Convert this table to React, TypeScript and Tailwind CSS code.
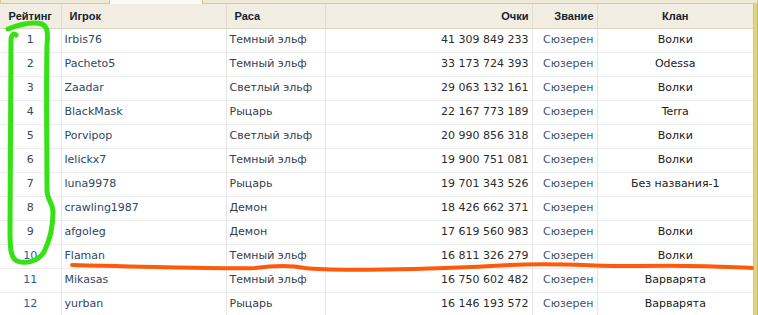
import React from 'react';

const ROWS = [
  { rank: 1, name: 'Irbis76', race: 'Темный эльф', points: '41 309 849 233', title: 'Сюзерен', clan: 'Волки' },
  { rank: 2, name: 'Pacheto5', race: 'Темный эльф', points: '33 173 724 393', title: 'Сюзерен', clan: 'Odessa' },
  { rank: 3, name: 'Zaadar', race: 'Светлый эльф', points: '29 063 132 161', title: 'Сюзерен', clan: 'Волки' },
  { rank: 4, name: 'BlackMask', race: 'Рыцарь', points: '22 167 773 189', title: 'Сюзерен', clan: 'Terra' },
  { rank: 5, name: 'Porvipop', race: 'Светлый эльф', points: '20 990 856 318', title: 'Сюзерен', clan: 'Волки' },
  { rank: 6, name: 'lelickx7', race: 'Темный эльф', points: '19 900 751 081', title: 'Сюзерен', clan: 'Волки' },
  { rank: 7, name: 'luna9978', race: 'Рыцарь', points: '19 701 343 526', title: 'Сюзерен', clan: 'Без названия-1' },
  { rank: 8, name: 'crawling1987', race: 'Демон', points: '18 426 662 371', title: 'Сюзерен', clan: '' },
  { rank: 9, name: 'afgoleg', race: 'Демон', points: '17 619 560 983', title: 'Сюзерен', clan: 'Волки' },
  { rank: 10, name: 'Flaman', race: 'Темный эльф', points: '16 811 326 279', title: 'Сюзерен', clan: 'Волки' },
  { rank: 11, name: 'Mikasas', race: 'Темный эльф', points: '16 750 602 482', title: 'Сюзерен', clan: 'Варварята' },
  { rank: 12, name: 'yurban', race: 'Рыцарь', points: '16 146 193 572', title: 'Сюзерен', clan: 'Варварята' },
];

export default function App() {
  return (
    <div className="relative w-[758px] h-[315px] overflow-hidden bg-white font-['DejaVu_Sans',sans-serif] text-[11px]">
      {/* tab strip above the table */}
      <div className="flex h-[4px] bg-[#f3efe4]">
        <div className="w-[110px] border-b border-x border-[#d9c98a] bg-[#efe9d8]" />
        <div className="w-[92px] bg-[#faf8f2]" />
        <div className="flex-1 border-b border-x border-[#d9c98a] bg-[#efe9d8]" />
      </div>

      <div className="flex">
        <table className="w-[753px] table-fixed border-collapse">
          <colgroup>
            <col className="w-[61px]" />
            <col className="w-[165px]" />
            <col className="w-[99px]" />
            <col className="w-[207px]" />
            <col className="w-[65px]" />
            <col className="w-[156px]" />
          </colgroup>
          <thead>
            <tr className="h-[24px] bg-[#f1ede2] border-b border-[#ddd4c0] font-['Liberation_Sans',sans-serif] font-bold text-[11px] text-[#17222e]">
              <th className="border-r border-[#e2dccb] text-center font-bold">Рейтинг</th>
              <th className="border-r border-[#e2dccb] text-left pl-[8px] font-bold">Игрок</th>
              <th className="border-r border-[#e2dccb] text-left pl-[8px] font-bold">Раса</th>
              <th className="border-r border-[#e2dccb] text-right pr-[3px] font-bold">Очки</th>
              <th className="border-r border-[#e2dccb] text-right pr-[3px] font-bold">Звание</th>
              <th className="text-center font-bold">Клан</th>
            </tr>
          </thead>
          <tbody>
            {ROWS.map((r) => (
              <tr key={r.rank} className="h-[24px] border-b border-[#ececec]">
                <td className={`border-r border-[#e6e6e6] text-center ${r.rank >= 10 ? 'text-[#2a5ea3]' : 'text-[#3a4654]'}`}>
                  {r.rank}
                </td>
                <td className="border-r border-[#e6e6e6] pl-[3px] text-[#2d4663] whitespace-nowrap">{r.name}</td>
                <td className="border-r border-[#e6e6e6] pl-[3px] text-[#34404e] whitespace-nowrap">{r.race}</td>
                <td className="border-r border-[#e6e6e6] pr-[3px] text-right text-[#2b2b2b] whitespace-nowrap">{r.points}</td>
                <td className="border-r border-[#e6e6e6] pr-[3px] text-right text-[#3d566f]">{r.title}</td>
                <td className="text-center text-[#1a1a1a] whitespace-nowrap">{r.clan}</td>
              </tr>
            ))}
          </tbody>
        </table>
        {/* frame on the right edge */}
        <div className="flex">
          <div className="w-px bg-[#c9c1aa]" />
          <div className="w-[3px] bg-[#e4d57c]" />
          <div className="w-px bg-[#b8b09a]" />
        </div>
      </div>

      {/* hand-drawn marks over the table */}
      <svg className="absolute inset-0 pointer-events-none" width="758" height="315" viewBox="0 0 758 315" fill="none">
        <path
          d="M 8 29 C 18 25, 32 21, 42 24 C 48 27, 48 34, 47 45 C 46 90, 47 150, 47 190 C 47 200, 53 203, 53 212 C 53 225, 50 240, 44 252 C 38 262, 25 264, 17 261 C 10 258, 10 245, 10 230 L 11 40 C 11 35, 14 33, 16 35"
          stroke="#35e314"
          strokeWidth="5"
          strokeLinecap="round"
          strokeLinejoin="round"
        />
        <path
          d="M 72 265 C 150 267, 230 269, 255 268 C 270 266, 290 265, 305 268 C 330 271, 420 270, 510 265 C 560 262, 600 267, 640 266 C 700 265, 730 267, 752 268"
          stroke="#ff5a0a"
          strokeWidth="4"
          strokeLinecap="round"
        />
      </svg>
    </div>
  );
}
